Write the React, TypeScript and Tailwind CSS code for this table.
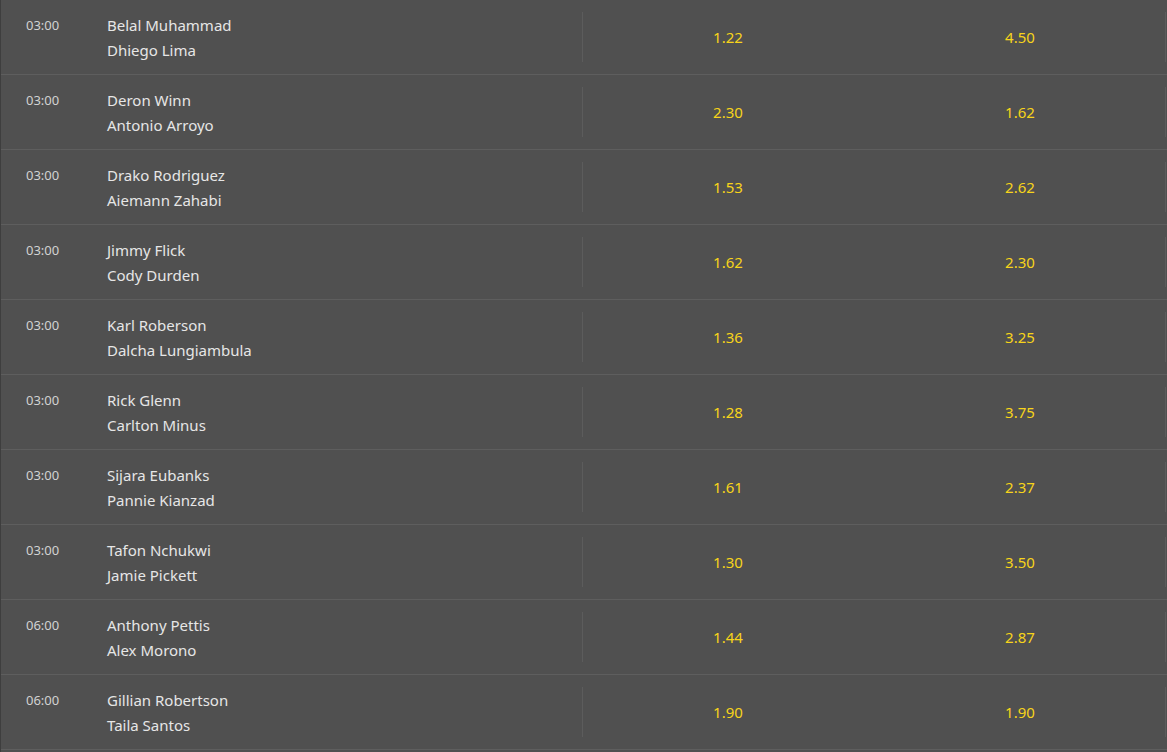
import React from "react";

const rows = [
  ["03:00", "Belal Muhammad", "Dhiego Lima", "1.22", "4.50"],
  ["03:00", "Deron Winn", "Antonio Arroyo", "2.30", "1.62"],
  ["03:00", "Drako Rodriguez", "Aiemann Zahabi", "1.53", "2.62"],
  ["03:00", "Jimmy Flick", "Cody Durden", "1.62", "2.30"],
  ["03:00", "Karl Roberson", "Dalcha Lungiambula", "1.36", "3.25"],
  ["03:00", "Rick Glenn", "Carlton Minus", "1.28", "3.75"],
  ["03:00", "Sijara Eubanks", "Pannie Kianzad", "1.61", "2.37"],
  ["03:00", "Tafon Nchukwi", "Jamie Pickett", "1.30", "3.50"],
  ["06:00", "Anthony Pettis", "Alex Morono", "1.44", "2.87"],
  ["06:00", "Gillian Robertson", "Taila Santos", "1.90", "1.90"],
];

export default function App() {
  return (
    <div
      className="w-[1167px] h-[752px] overflow-hidden bg-[#505050] border-l border-[#3e3e3e]"
      style={{ fontFamily: '"Noto Sans", "Open Sans", sans-serif' }}
    >
      {rows.map((r, i) => (
        <div key={i} className="flex h-[75px] border-b border-[#5e5e5e]">
          <div className="w-[106px] pl-[25px] pt-[13px] text-[13px] leading-[25px] text-[#d2d2d2]">
            {r[0]}
          </div>
          <div className="w-[475px] pt-[13px] text-[15px] leading-[25px] text-[#e6e6e6] flex flex-col">
            <span>{r[1]}</span>
            <span>{r[2]}</span>
          </div>
          <div className="flex items-center">
            <div className="w-px h-[50px] bg-[#5c5c5c]" />
          </div>
          <div className="w-[290px] flex items-center justify-center text-[15px] text-[#f7d41a]">
            {r[3]}
          </div>
          <div className="w-[292px] pl-[2px] flex items-center justify-center text-[15px] text-[#f7d41a]">
            {r[4]}
          </div>
          <div className="flex items-center">
            <div className="w-px h-[50px] bg-[#5c5c5c]" />
          </div>
        </div>
      ))}
    </div>
  );
}
